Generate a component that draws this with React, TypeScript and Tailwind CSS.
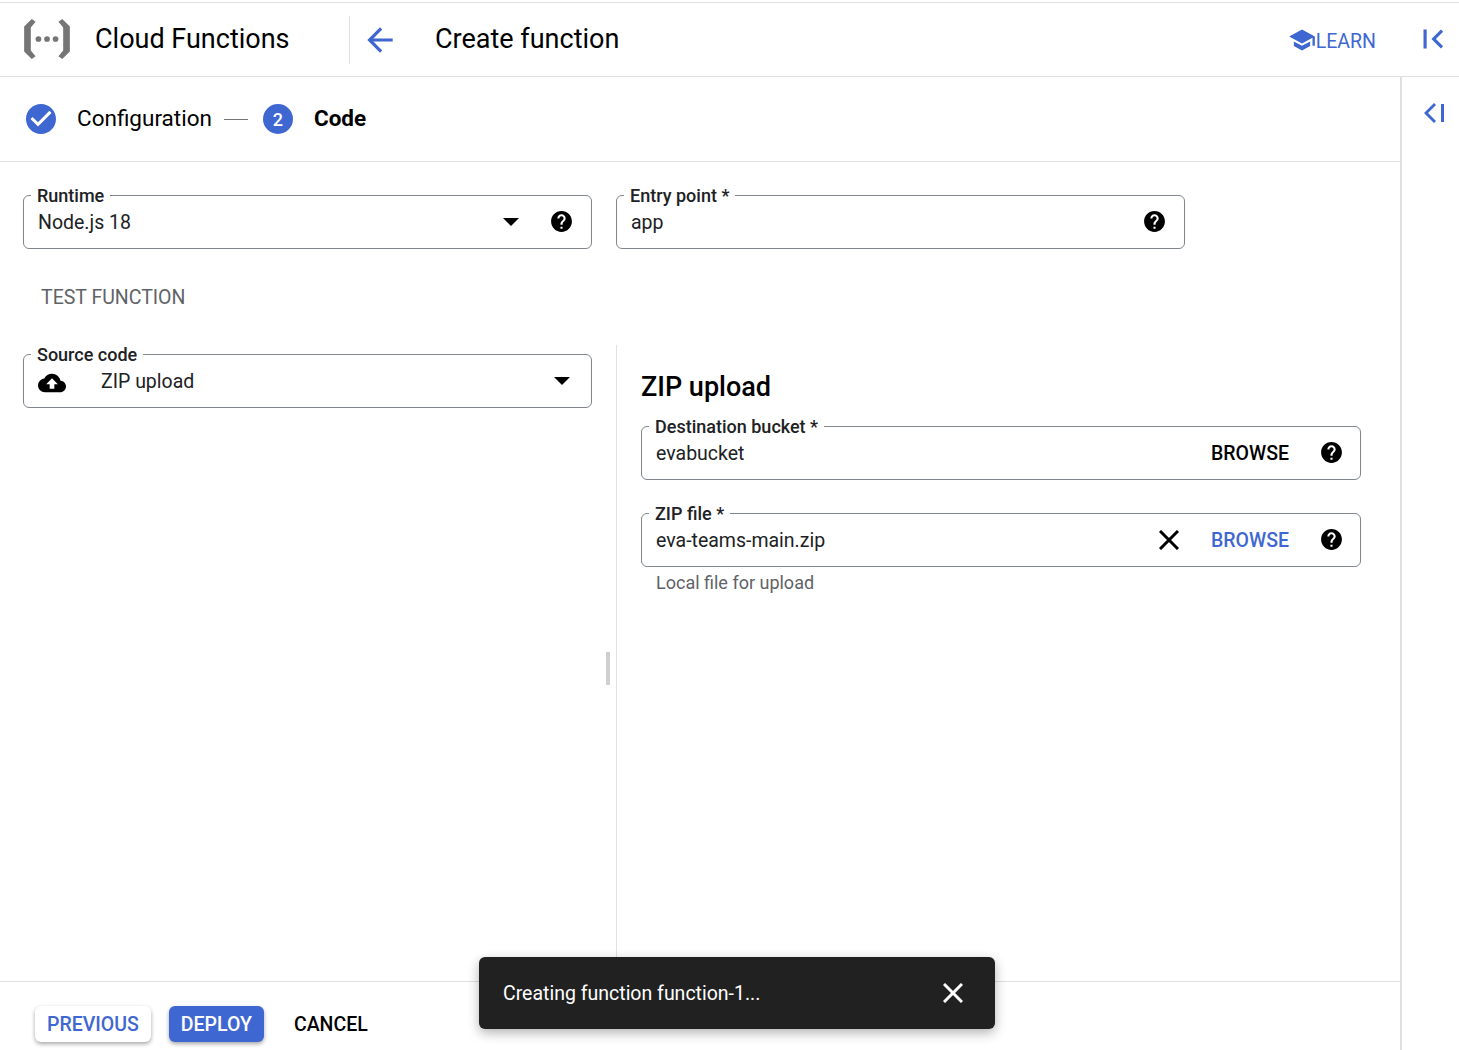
import React from "react"
import { MdArrowBack, MdCheckCircle, MdCloudUpload, MdFirstPage, MdHelp, MdSchool } from "react-icons/md"

interface FieldProps {
  label: string
  className?: string
  children: React.ReactNode
}

const Field = ({ label, className, children }: FieldProps) => (
  <div className={`relative flex h-[54px] items-center rounded-[6px] border border-[#80868b] pl-[14px] pr-[17px] text-[19.5px] text-[#202124] ${className ?? ""}`}>
    <span className="absolute -top-[11px] left-[7px] bg-white px-[6px] text-[18px] font-medium leading-[22px] text-[#202124]">{label}</span>
    {children}
  </div>
)

const Caret = ({ className }: { className: string }) => (
  <span className={`h-0 w-0 border-x-[8px] border-t-[8px] border-x-transparent border-t-black ${className}`} />
)

const CloseIcon = ({ className }: { className?: string }) => (
  <svg className={className} width="20" height="20" viewBox="0 0 20 20" stroke="currentColor" strokeWidth="3" fill="none">
    <path d="M1 1l18 18M19 1L1 19" />
  </svg>
)

const Logo = () => (
  <svg className="mb-[2px]" width="46" height="40" viewBox="0 0 48 42" fill="#757575">
    <path d="M8 0l4 3-5 6v24l5 6-4 3-8-8V8z" />
    <path d="M40 0l-4 3 5 6v24l-5 6 4 3 8-8V8z" />
    <circle cx="15" cy="21" r="3" />
    <circle cx="24" cy="21" r="3" />
    <circle cx="33" cy="21" r="3" />
  </svg>
)

const App = () => {
  return (
    <div className="relative flex h-[1050px] w-full flex-col overflow-hidden bg-white font-['Roboto',sans-serif] text-black">
      <div className="mt-[2px] flex h-[75px] shrink-0 items-center border-y border-[#e0e0e0] pl-[24px] pr-[7px]">
        <Logo />
        <span className="ml-[25px] w-[254px] text-[27px]">Cloud Functions</span>
        <div className="h-[48px] w-px bg-[#e0e0e0]" />
        <MdArrowBack className="ml-[11px] text-[#3f67d2]" size={38} />
        <span className="ml-[36px] text-[27px]">Create function</span>
        <div className="ml-auto flex items-center text-[19.5px] text-[#3f67d2]">
          <MdSchool size={28} />
          <span className="mt-[4px]">LEARN</span>
        </div>
        <MdFirstPage className="mb-[2px] ml-[38px] text-[#3f67d2]" size={38} />
      </div>

      <div className="flex min-h-0 flex-1">
        <div className="flex min-w-0 flex-1 flex-col">
          <div className="flex h-[85px] shrink-0 items-center border-b border-[#e0e0e0] pl-[23px]">
            <MdCheckCircle className="text-[#3f67d2]" size={36} />
            <span className="ml-[18px] text-[22.5px]">Configuration</span>
            <div className="ml-[12px] h-px w-[24px] bg-[#757575]" />
            <span className="ml-[15px] flex h-[30px] w-[30px] items-center justify-center rounded-full bg-[#3f67d2] text-[18px] font-medium text-white">2</span>
            <span className="ml-[21px] text-[22.5px] font-bold">Code</span>
          </div>

          <div className="flex min-h-0 flex-1 flex-col">
            <div className="flex gap-[24px] pl-[23px] pt-[33px]">
              <Field label="Runtime" className="w-[569px]">
                <span className="mt-[2px]">Node.js 18</span>
                <Caret className="ml-auto mr-[30px]" />
                <MdHelp size={25} className="mb-[1px] text-black" />
              </Field>
              <Field label="Entry point *" className="w-[569px]">
                <span className="mt-[2px]">app</span>
                <MdHelp size={25} className="mb-[1px] ml-auto text-black" />
              </Field>
            </div>

            <div className="mt-[37px] pl-[41px] text-[19.5px] leading-[24px] text-[#5f6368]">TEST FUNCTION</div>

            <div className="mt-[35px] flex min-h-0 flex-1">
              <div className="relative w-[593px] shrink-0 pl-[23px] pt-[9px]">
                <Field label="Source code" className="w-[569px]">
                  <MdCloudUpload size={28} className="mt-[3px] text-black" />
                  <span className="ml-[35px] mt-[2px]">ZIP upload</span>
                  <Caret className="ml-auto mr-[4px]" />
                </Field>
                <div className="absolute left-[606px] top-[307px] h-[33px] w-[4px] bg-[#d0d0d0]" />
              </div>
              <div className="ml-[23px] flex-1 border-l border-[#e0e0e0] pl-[24px] pt-[25px]">
                <h2 className="text-[27px] font-medium leading-[34px]">ZIP upload</h2>
                <div className="mt-[22px] flex w-[720px] flex-col gap-[33px]">
                  <Field label="Destination bucket *">
                    <span className="mt-[2px]">evabucket</span>
                    <span className="ml-auto mr-[30px] mt-[2px] font-medium text-black">BROWSE</span>
                    <MdHelp size={25} className="-mr-[1px] mb-[1px] text-black" />
                  </Field>
                  <div>
                    <Field label="ZIP file *">
                      <span className="mt-[2px]">eva-teams-main.zip</span>
                      <CloseIcon className="ml-auto mr-[32px] text-black" />
                      <span className="mr-[30px] mt-[2px] font-medium text-[#3f67d2]">BROWSE</span>
                      <MdHelp size={25} className="-mr-[1px] mb-[1px] text-black" />
                    </Field>
                    <div className="ml-[15px] mt-[5px] text-[18px] leading-[22px] text-[#5f6368]">Local file for upload</div>
                  </div>
                </div>
              </div>
            </div>
          </div>

          <div className="flex h-[69px] shrink-0 items-start gap-[18px] border-t border-[#e0e0e0] pl-[35px] pt-[24px] text-[19.5px] font-medium">
            <button className="h-[36px] rounded-[6px] bg-white px-[12px] pt-[2px] text-[#3f67d2] shadow-[0_2px_4px_rgba(0,0,0,0.35)]">PREVIOUS</button>
            <button className="h-[36px] rounded-[6px] bg-[#3f67d2] px-[12px] pt-[2px] text-white shadow-[0_2px_4px_rgba(0,0,0,0.35)]">DEPLOY</button>
            <button className="h-[36px] px-[12px] pt-[2px] text-black">CANCEL</button>
          </div>
        </div>

        <div className="w-[59px] shrink-0 border-l-2 border-[#e0e0e0] pl-[21px] pt-[20px]">
          <svg width="24" height="32" viewBox="0 0 24 32" fill="#3f67d2">
            <path d="M13 8l-2-2-10 10 10 10 2-2-8-8z" />
            <rect x="18" y="7" width="3" height="18" />
          </svg>
        </div>
      </div>

      <div className="absolute left-[479px] top-[957px] flex h-[72px] w-[516px] items-center justify-between rounded-[6px] bg-[#212121] pl-[24px] pr-[32px] text-[19.5px] text-white shadow-[0_4px_12px_rgba(0,0,0,0.3)]">
        <span className="mt-[2px]">Creating function function-1...</span>
        <CloseIcon className="mb-[1px]" />
      </div>
    </div>
  )
}

export default App
